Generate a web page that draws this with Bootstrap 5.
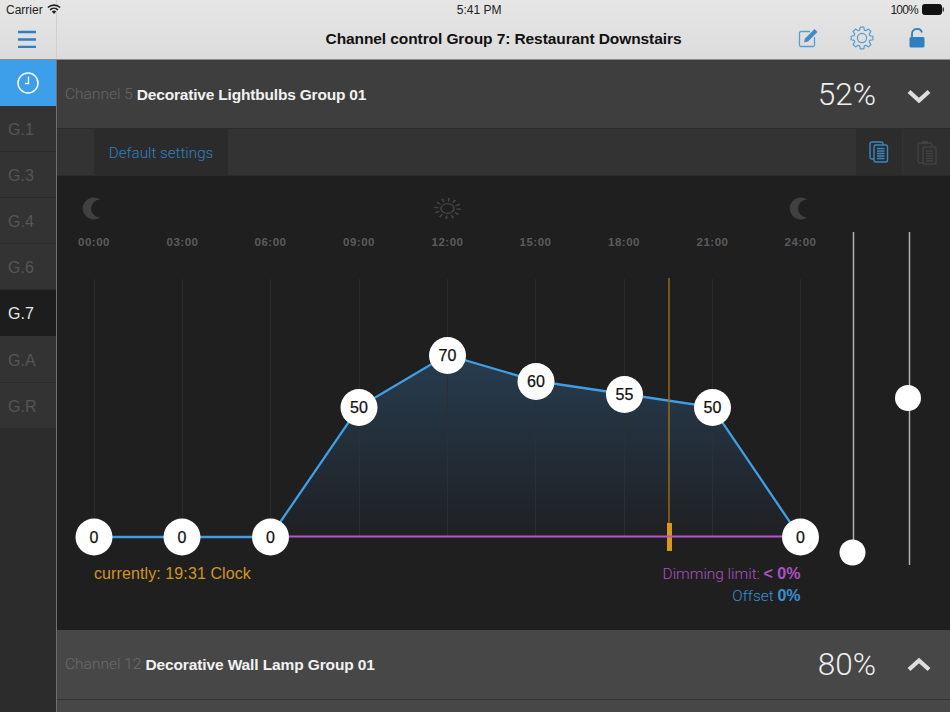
<!DOCTYPE html>
<html lang="en">
<head>
<meta charset="utf-8">
<title>Channel control</title>
<link href="https://cdn.jsdelivr.net/npm/bootstrap@5.3.0/dist/css/bootstrap.min.css" rel="stylesheet">
<style>
html,body{height:712px;overflow:hidden;}
body{font-family:"Liberation Sans",Arial,sans-serif;background:#2c2c2c;width:950px;}
.light-txt{font-family:Roboto,"Liberation Sans",sans-serif;font-weight:300;}
.top-zone{height:60px;background:linear-gradient(#e6e6e6,#dcdcdc);border-bottom:1px solid #8c8c8c;}
.status-row{height:19px;font-size:12px;color:#222;padding:0 6px;}
.status-time{padding-left:7px;}
.status-pct{letter-spacing:-.8px;}
.tool-row{height:40px;}
.burger-cell{width:57px;border-right:1px solid #cfcfcf;margin-top:-19px;height:59px;padding:19px 2px 0 0;}
.top-title{font-size:15.5px;font-weight:700;color:#111;letter-spacing:-.09px;}
.tool-icons{padding:0 25px 2px 0;}
.tool-edit{margin-right:30px;}
.tool-gear{margin-right:35px;}
.side-col{width:57px;height:652px;background:#2c2c2c;border-right:1px solid #707070;}
.side-clock{height:45.5px;background:#3d9fea;}
.side-item{height:46.2px;padding:3px 0 0 8px;font-size:16px;color:#565656;background:#333;border-bottom:1px solid #2b2b2b;}
.side-on{background:#1d1d1d;color:#e8e8e8;border-bottom-color:#1d1d1d;}
.chan-head{height:68px;background:#3e3e3e;padding:1px 19px 0 8px;}
.chan-foot{background:#474747;height:69px;padding-top:1px;}
.chan-num{color:#666;font-size:15.5px;margin-right:4px;}
.chan-foot .chan-num{color:#6c6c6c;}
.chan-name{color:#f2f2f2;font-weight:700;font-size:15.5px;letter-spacing:-.19px;}
.chan-foot .chan-name{letter-spacing:-.12px;}
.chan-pct{color:#eee;font-size:31.5px;margin-right:31px;line-height:1;}
.chev-down{margin-top:3px;}
.tab-strip{height:48px;background:#333;border-top:1px solid #2c2c2c;border-bottom:1px solid #2a2a2a;padding-left:37px;}
.tab-on{background:#2b2b2b;width:134px;height:46px;padding-top:2px;font-size:15.2px;color:#3280c0;}
.tab-btn{width:47px;height:46px;background:#2c2c2c;border-left:1px solid #333;}
.tab-off{background:#2f2f2f;width:48px;}
.chart-zone{height:454px;background:#1f1f1f;}
.chart-svg{display:block;}
.hour{font:700 11.5px "Liberation Sans",sans-serif;fill:#5c5c5c;text-anchor:middle;letter-spacing:.5px;}
.node-num{font:400 16px "Liberation Sans",sans-serif;fill:#111;stroke:#111;stroke-width:.25;text-anchor:middle;}
.note{font:400 16px "Liberation Sans",sans-serif;}
.note-lt{font-size:15.4px;}
.note-b{font-weight:700;}
.foot-rest{height:14px;background:#474747;border-top:1px solid #333;}
</style>
</head>
<body>
<div class="top-zone">
  <div class="status-row d-flex align-items-center position-relative">
    <span>Carrier</span>
    <svg class="ms-1" width="14" height="11" viewBox="0 0 14 11"><path d="M7 10 4.800 7.600a3.200 3.200 0 0 1 4.400 0zM3.600 6.400 2.500 5.200a6.600 6.600 0 0 1 9 0l-1.100 1.200a5 5 0 0 0-6.800 0zM1.400 4.100.3 2.900a9.800 9.800 0 0 1 13.400 0l-1.100 1.200a8.200 8.200 0 0 0-11.200 0z" fill="#222"/></svg>
    <span class="status-time flex-grow-1 text-center">5:41 PM</span>
    <span class="status-pct">100%</span>
    <svg class="ms-1" width="22" height="11" viewBox="0 0 22 11"><rect x=".5" y=".5" width="19" height="10" rx="2" fill="#111" stroke="#111"/><rect x="20.500" y="3.500" width="1.500" height="4" fill="#444"/></svg>
  </div>
  <div class="tool-row d-flex align-items-center">
    <div class="burger-cell d-flex align-items-center justify-content-center flex-shrink-0">
      <svg width="20" height="18" viewBox="0 0 20 18"><path d="M1 2h18M1 9.500h18M1 17h18" stroke="#2f7fc1" stroke-width="2.600" fill="none"/></svg>
    </div>
    <div class="top-title flex-grow-1 text-center">Channel control Group 7: Restaurant Downstairs</div>
    <div class="tool-icons d-flex align-items-center position-absolute end-0">
      <svg class="tool-edit" width="22" height="20" viewBox="0 0 22 20"><path d="M12 3.500H3a1.500 1.500 0 0 0-1.500 1.500v12A1.500 1.500 0 0 0 3 18.500h12a1.500 1.500 0 0 0 1.500-1.500V9" fill="none" stroke="#5a9bd0" stroke-width="1.300"/><path d="M6 14.500 7 10.500 16.500 1l3 3L10 13.500z" fill="#3f8ccb"/></svg>
      <svg class="tool-gear" width="24" height="24" viewBox="-12 -12 24 24"><path d="M7.840-2.400 10.860-1.720 10.860 1.720 7.840 2.400 7.240 3.850 8.890 6.460 6.460 8.890 3.850 7.240 2.400 7.840 1.720 10.860-1.720 10.860-2.400 7.840-3.850 7.240-6.460 8.890-8.890 6.460-7.240 3.850-7.840 2.400-10.860 1.720-10.860-1.720-7.840-2.400-7.240-3.850-8.890-6.460-6.460-8.890-3.850-7.240-2.400-7.840-1.720-10.860 1.720-10.860 2.400-7.840 3.850-7.240 6.460-8.890 8.890-6.460 7.240-3.850z" fill="none" stroke="#5a9bd0" stroke-width="1.200" stroke-linejoin="round"/><circle r="4.600" fill="none" stroke="#5a9bd0" stroke-width="1.200"/></svg>
      <svg width="16" height="20" viewBox="0 0 16 20"><rect x=".5" y="9" width="15" height="10.500" rx="1.500" fill="#2f7fc1"/><path d="M3 9V5.500a4.500 4.500 0 0 1 4.500-4.500 5 5 0 0 1 5.500 3.500" fill="none" stroke="#2f7fc1" stroke-width="1.800"/></svg>
    </div>
  </div>
</div>
<div class="d-flex">
  <nav class="side-col d-flex flex-column flex-shrink-0">
    <div class="side-clock d-flex align-items-center justify-content-center">
      <svg width="24" height="24" viewBox="0 0 24 24"><circle cx="12" cy="12" r="10" fill="none" stroke="#fff" stroke-width="1.500"/><path d="M12.500 5.500v7H9" fill="none" stroke="#fff" stroke-width="1.300"/></svg>
    </div>
    <div class="side-item d-flex align-items-center">G.1</div>
    <div class="side-item d-flex align-items-center">G.3</div>
    <div class="side-item d-flex align-items-center">G.4</div>
    <div class="side-item d-flex align-items-center">G.6</div>
    <div class="side-item side-on d-flex align-items-center">G.7</div>
    <div class="side-item d-flex align-items-center">G.A</div>
    <div class="side-item d-flex align-items-center">G.R</div>
  </nav>
  <main class="flex-grow-1">
    <div class="chan-head d-flex align-items-center">
      <span class="light-txt chan-num">Channel 5</span><span class="chan-name flex-grow-1">Decorative Lightbulbs Group 01</span>
      <span class="light-txt chan-pct">52%</span>
      <svg class="chev-down" width="24" height="14" viewBox="0 0 24 14"><path d="M2 2.500 12 11.500 22 2.500" fill="none" stroke="#ddd" stroke-width="4.200"/></svg>
    </div>
    <div class="tab-strip d-flex">
      <div class="tab-on light-txt d-flex align-items-center justify-content-center">Default settings</div>
      <div class="flex-grow-1"></div>
      <div class="tab-btn d-flex align-items-center justify-content-center">
        <svg width="20" height="22" viewBox="0 0 20 22"><rect x="1" y="1" width="13" height="17" rx="2" fill="none" stroke="#3a86c4" stroke-width="1.400"/><rect x="5" y="4" width="13.500" height="17" rx="2" fill="#2c2c2c" stroke="#3a86c4" stroke-width="1.400"/><path d="M8 7.500h7.500M8 10h7.500M8 12.500h7.500M8 15h7.500M8 17.500h7.500" stroke="#3a86c4" stroke-width="1.500"/></svg>
      </div>
      <div class="tab-btn tab-off d-flex align-items-center justify-content-center">
        <svg width="20" height="25" viewBox="0 0 20 25"><rect x="1" y="3" width="14" height="20" rx="2" fill="none" stroke="#424242" stroke-width="1.400"/><rect x="5" y="1" width="6" height="3" fill="#424242"/><rect x="6" y="7" width="13" height="17" rx="2" fill="#2f2f2f" stroke="#424242" stroke-width="1.400"/><path d="M9 11h7M9 13.500h7M9 16h7M9 18.500h7M9 21h7" stroke="#424242" stroke-width="1.300"/></svg>
      </div>
    </div>
    <div class="chart-zone">
      <svg class="chart-svg" width="893" height="454" viewBox="57 176 893 454">
        <defs><linearGradient id="fillG" x1="0" y1="355" x2="0" y2="537" gradientUnits="userSpaceOnUse"><stop offset="0" stop-color="#273c4f"/><stop offset="1" stop-color="#1f2023"/></linearGradient></defs>
        <path d="M100 199.500A11 11 0 1 0 100 217.500 9 9 0 0 1 100 199.500z" fill="#404040"/>
        <path d="M807 199.500A11 11 0 1 0 807 217.500 9 9 0 0 1 807 199.500z" fill="#404040"/>
        <g transform="translate(447.500 208.500) scale(1 .8)">
          <ellipse rx="6.500" ry="6" fill="none" stroke="#444" stroke-width="1.600"/>
          <circle r="11" fill="none" stroke="#444" stroke-width="4.500" stroke-dasharray="1.800 3.960"/>
        </g>
        <text class="hour" x="94" y="246">00:00</text><text class="hour" x="182.500" y="246">03:00</text><text class="hour" x="270.500" y="246">06:00</text><text class="hour" x="359" y="246">09:00</text><text class="hour" x="447.500" y="246">12:00</text><text class="hour" x="535.500" y="246">15:00</text><text class="hour" x="624" y="246">18:00</text><text class="hour" x="712.500" y="246">21:00</text><text class="hour" x="800.500" y="246">24:00</text>
        <path d="M94.500 279V537M182.500 279V537M270.500 279V537M359.500 279V537M447.500 279V537M535.500 279V537M624.500 279V537M712.500 279V537M800.500 279V537" stroke="#2a2a2a"/>
        <path d="M270 537 359 407 447 355 536 381 624 394 712 407 800 537z" fill="url(#fillG)"/>
        <path d="M359.500 407V537M447.500 355V537M535.500 381V537M624.500 394V537M712.500 407V537" stroke="#2a3036"/>
        <path d="M94 537H270L359 407 447 355 536 381 624 394 712 407 800 537" fill="none" stroke="#3f9fe6" stroke-width="2.300"/>
        <path d="M270 536.500H800" stroke="#b855cf" stroke-width="2"/>
        <path d="M669 278V523" stroke="#9a6f1c" stroke-width="1.400"/>
        <rect x="667" y="523" width="5" height="28" fill="#d99a1c"/>
        <path d="M667 536.500H672" stroke="#b855cf" stroke-width="2"/>
        <g fill="#fff">
          <circle cx="94" cy="537" r="18.500"/><circle cx="182" cy="537" r="18.500"/><circle cx="270.500" cy="537" r="18.500"/><circle cx="359" cy="407.500" r="18.500"/><circle cx="447.500" cy="355.500" r="18.500"/><circle cx="536" cy="381.500" r="18.500"/><circle cx="624.500" cy="394.500" r="18.500"/><circle cx="712.500" cy="407.500" r="18.500"/><circle cx="800.500" cy="537" r="18.500"/>
        </g>
        <text class="node-num" x="94" y="543">0</text><text class="node-num" x="182" y="543">0</text><text class="node-num" x="270.500" y="543">0</text><text class="node-num" x="359" y="413">50</text><text class="node-num" x="447.500" y="361">70</text><text class="node-num" x="536" y="387">60</text><text class="node-num" x="624.500" y="400">55</text><text class="node-num" x="712.500" y="413">50</text><text class="node-num" x="800.500" y="543">0</text>
        <text class="note" x="94" y="578.500" fill="#d2951e" letter-spacing=".1">currently: 19:31 Clock</text>
        <text class="note" x="800.500" y="578.500" fill="#ab52c4" text-anchor="end"><tspan class="light-txt note-lt">Dimming limit: </tspan><tspan class="note-b">&lt; 0%</tspan></text>
        <text class="note" x="800.500" y="601" fill="#3a8fd4" text-anchor="end"><tspan class="light-txt note-lt">Offset </tspan><tspan class="note-b">0%</tspan></text>
        <path d="M853.500 232V545M909.500 232V565" stroke="#b0b0b0" stroke-width="1.500"/>
        <circle cx="852.500" cy="552.500" r="13" fill="#fff"/>
        <circle cx="908" cy="398" r="13" fill="#fff"/>
      </svg>
    </div>
    <div class="chan-head chan-foot d-flex align-items-center">
      <span class="light-txt chan-num">Channel 12</span><span class="chan-name flex-grow-1">Decorative Wall Lamp Group 01</span>
      <span class="light-txt chan-pct">80%</span>
      <svg width="24" height="14" viewBox="0 0 24 14"><path d="M2 11.500 12 2.500 22 11.500" fill="none" stroke="#ddd" stroke-width="4.200"/></svg>
    </div>
    <div class="foot-rest"></div>
  </main>
</div>
<script src="https://cdn.jsdelivr.net/npm/bootstrap@5.3.0/dist/js/bootstrap.bundle.min.js"></script>
</body>
</html>
